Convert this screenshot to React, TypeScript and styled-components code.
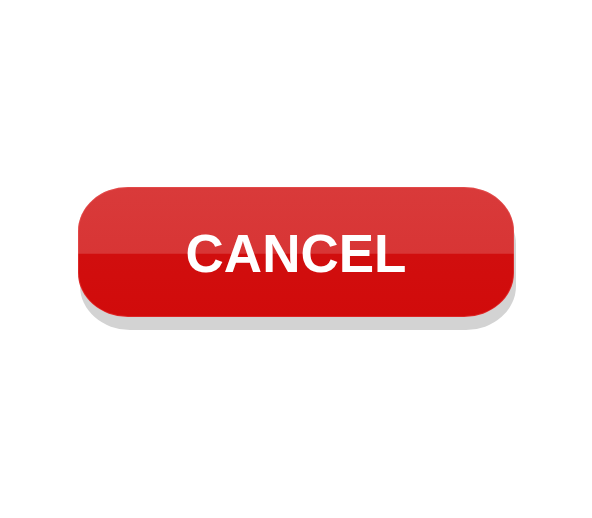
import React from "react";
import styled, { createGlobalStyle } from "styled-components";

const GlobalStyle = createGlobalStyle`
  html, body {
    margin: 0;
    padding: 0;
    background: #ffffff;
  }
`;

const Page = styled.div`
  width: 592px;
  height: 518px;
  box-sizing: border-box;
  padding: 187px 0 0 78px;
  background: #ffffff;
`;

const CancelButton = styled.button`
  display: flex;
  align-items: center;
  justify-content: center;
  width: 436px;
  height: 130px;
  padding: 0;
  border: none;
  border-radius: 50px / 44px;
  background: linear-gradient(
    to bottom,
    #d93a3a 0%,
    #d83535 51%,
    #d10e0e 51.6%,
    #d10b0b 100%
  );
  box-shadow: 2px 13px 0 #d3d3d3, inset 0 0 0 1px rgba(255, 120, 120, 0.25);
  color: #ffffff;
  font-family: "Liberation Sans", Arial, sans-serif;
  font-weight: 700;
  font-size: 53px;
  cursor: pointer;
`;

const Label = styled.span`
  line-height: 1;
  margin-top: 2px;
`;

const App = () => {
  return (
    <>
      <GlobalStyle />
      <Page>
        <CancelButton type="button">
          <Label>CANCEL</Label>
        </CancelButton>
      </Page>
    </>
  );
};

export default App;
